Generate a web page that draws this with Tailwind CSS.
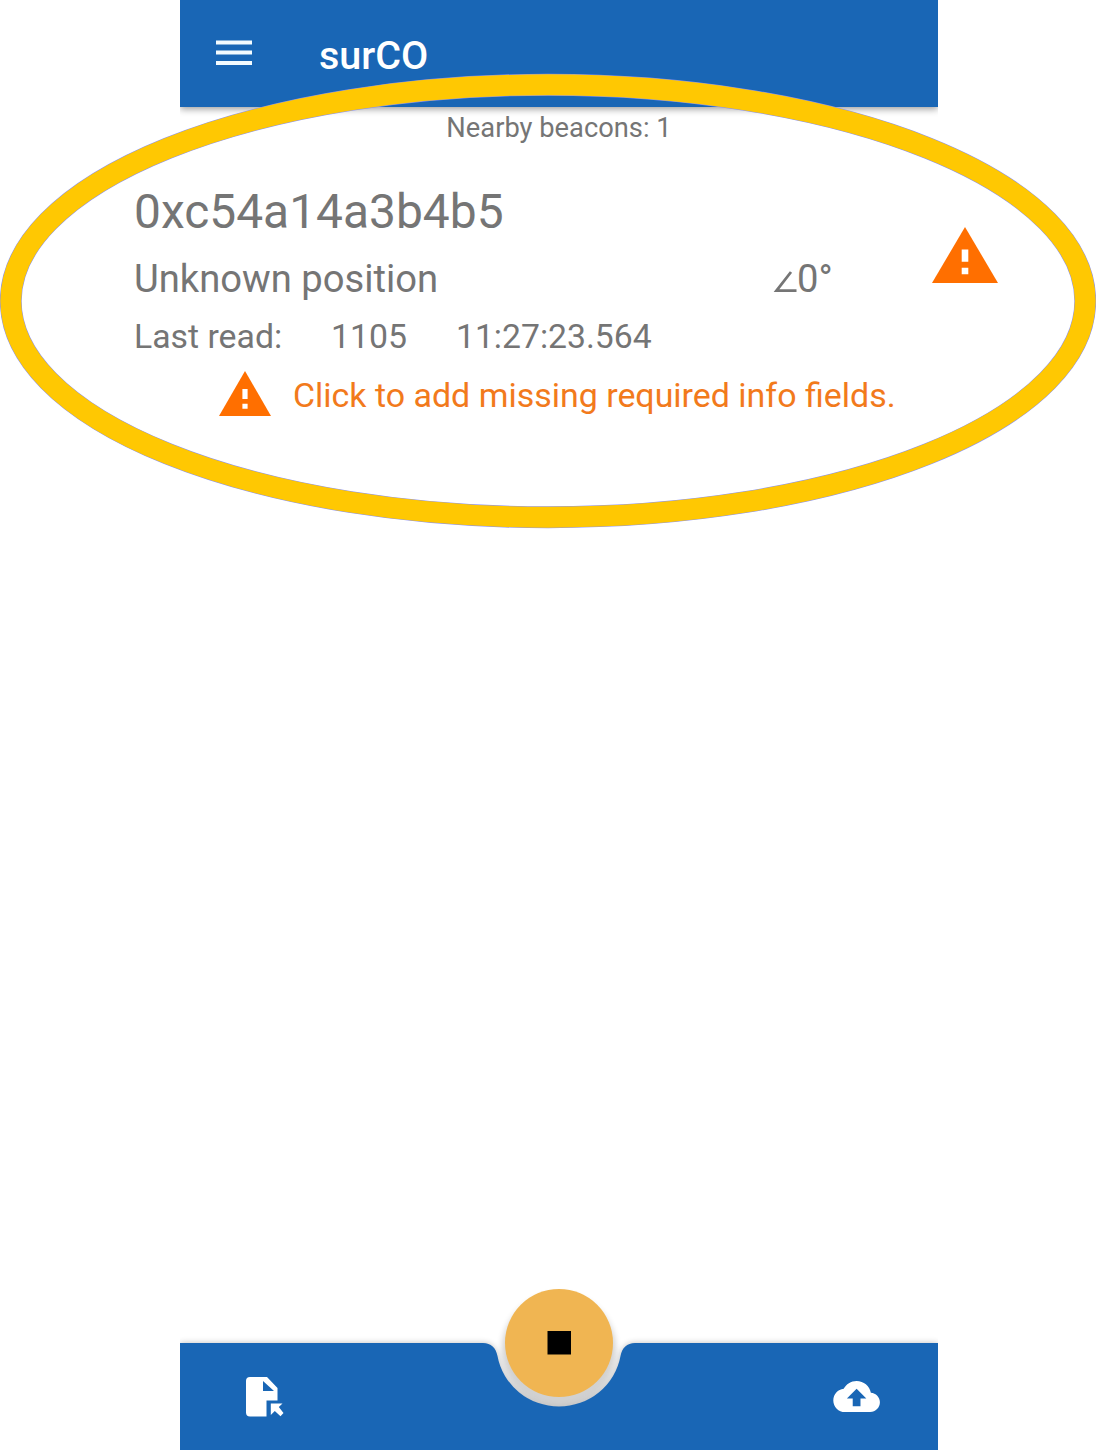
<!DOCTYPE html>
<html lang="en">
<head>
<meta charset="utf-8">
<title>surCO</title>
<script src="https://cdn.jsdelivr.net/npm/@tailwindcss/browser@4"></script>
</head>
<body class="bg-white font-['Roboto',sans-serif] text-[#757575]">
<div class="relative flex h-[1450px] w-[1096px] flex-col overflow-hidden">
  <header class="ml-[180px] flex h-[107px] w-[758px] shrink-0 items-center bg-[#1966b5] pl-9 text-white shadow-[0_2px_7px_rgba(0,0,0,0.4)] [clip-path:inset(0_0_-12px_0)]">
    <svg class="-mt-[2px] h-[26px] w-9" viewBox="0 0 36 26" fill="#f3fbff"><path d="M0 .5h36v4H0zM0 10.500h36v4H0zM0 21h36v4H0z"/></svg>
    <h1 class="ml-[67px] mt-[5px] text-[39.5px] leading-[46px] font-medium whitespace-nowrap">surCO</h1>
  </header>
  <main class="flex grow flex-col">
    <p class="ml-[180px] mt-[5px] w-[758px] text-center text-[27.3px] leading-8 whitespace-nowrap">Nearby beacons: 1</p>
    <section class="mt-[40px] flex">
      <div class="ml-[133px] w-[799px] shrink-0 whitespace-nowrap">
        <h2 class="ml-px text-[47.9px] leading-[56px]">0xc54a14a3b4b5</h2>
        <div class="mt-[17px] flex items-center text-[38.2px] leading-[44px]">
          <span class="w-[640px] pl-px">Unknown position</span>
          <svg class="mt-[6px] h-[22px] w-[24px]" viewBox="0 0 24 22" fill="none" stroke="#757575" stroke-width="2.800"><path d="M18 1 3.500 19.600H23.500"/></svg>
          <span>0°</span>
        </div>
        <div class="mt-4 flex pl-px text-[33.8px] leading-10">
          <span class="w-[197px]">Last read:</span><span class="w-[125px]">1105</span><span class="text-[33.7px]">11:27:23.564</span>
        </div>
        <div class="mt-[14px] ml-[86px] flex text-[#f27a1c]">
          <svg class="h-[45px] w-[52px]" viewBox="0 0 22 19"><path fill="#ff6f00" d="M0 19h22L11 0z"/><path fill="#fff" d="M9.900 7.600h2.200v4.200H9.900zM9.900 13.800h2.200v2.200H9.900z"/></svg>
          <span class="mt-[5px] ml-[22px] text-[33.95px] leading-10">Click to add missing required info fields.</span>
        </div>
      </div>
      <svg class="mt-[43px] h-[56px] w-[66px]" viewBox="0 0 22 19" preserveAspectRatio="none"><path fill="#ff6f00" d="M0 19h22L11 0z"/><path fill="#fff" d="M9.900 7.600h2.200v4.200H9.900zM9.900 13.800h2.200v2.200H9.900z"/></svg>
    </section>
  </main>
  <footer class="relative ml-[180px] h-[170px] w-[758px] shrink-0">
    <svg class="h-full w-full" viewBox="0 0 758 170">
      <defs>
        <filter id="soft" x="-20%" y="-20%" width="140%" height="140%"><feGaussianBlur stdDeviation="3"/></filter>
        <clipPath id="bay"><path d="M0 0H758V63H455C447 63 442 68 440.500 76A62.500 62.500 0 0 1 317.500 76C316 68 311 63 303 63H0z"/></clipPath>
      </defs>
      <path d="M0 63H303C311 63 316 68 317.500 76A62.500 62 0 0 0 440.500 76C442 68 447 63 455 63H758V170H0z" fill="#000" opacity=".25" filter="url(#soft)"/>
      <g clip-path="url(#bay)"><circle cx="379" cy="71" r="57" fill="#000" opacity=".18" filter="url(#soft)"/></g>
      <path d="M0 63H303C311 63 316 68 317.500 76A62.500 61.500 0 0 0 440.500 76C442 68 447 63 455 63H758V170H0z" fill="#1966b5"/>
      <circle cx="379" cy="63" r="54" fill="#f0b552"/>
      <path d="M367.500 51h23.500v23.500h-23.500z"/>
      <g fill="#fff">
        <path fill-rule="evenodd" d="M70 97h17l10.500 11V120.500H86.500v16H70a4 4 0 0 1-4-4v-31.500a4 4 0 0 1 4-4zM83 101v10h11z"/>
        <path d="M90.800 123.500h11.700l-3.700 3.500 4.700 6-3 3.200-5.700-5.200-4 4z"/>
      </g>
      <path transform="translate(653.300 93.200) scale(1.942)" fill="#fff" d="M19.350 10.040C18.670 6.590 15.640 4 12 4 9.110 4 6.600 5.640 5.350 8.040 2.340 8.360 0 10.910 0 14c0 3.310 2.690 6 6 6h13c2.760 0 5-2.240 5-5 0-2.640-2.050-4.780-4.650-4.960zM14 13v4h-4v-4H7l5-5 5 5h-3z"/>
    </svg>
  </footer>
  <svg class="pointer-events-none absolute inset-0" width="1096" height="1450" fill="none">
    <ellipse cx="548" cy="301" rx="537.250" ry="216.250" stroke="#8a92f5" stroke-width="21.800"/>
    <ellipse cx="548" cy="301" rx="537.250" ry="216.250" stroke="#ffc802" stroke-width="20.800"/>
  </svg>
</div>
</body>
</html>
